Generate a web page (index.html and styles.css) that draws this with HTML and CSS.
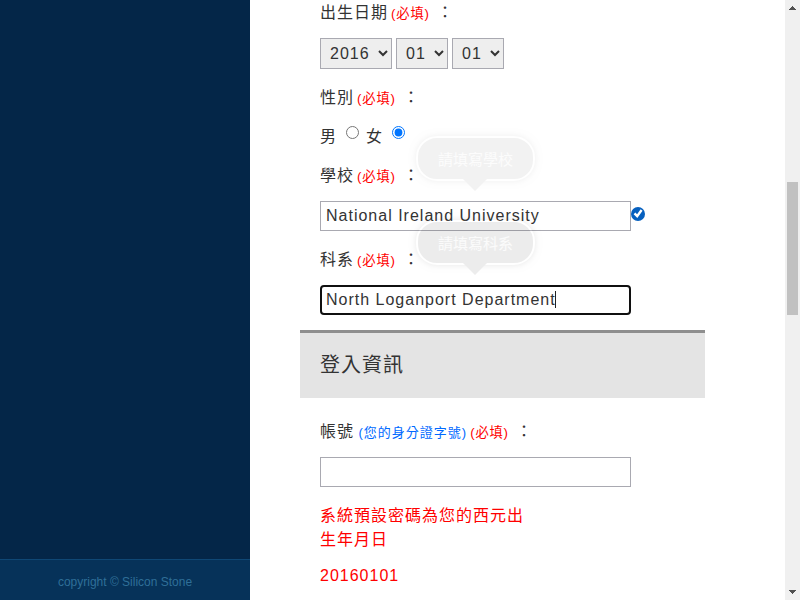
FILE: index.html
```html
<!DOCTYPE html>
<html lang="zh-Hant">
<head>
<meta charset="utf-8">
<title>Silicon Stone</title>
<link rel="stylesheet" href="styles.css">
</head>
<body>
<div class="app">
  <aside class="sidebar"><footer class="copyright">copyright © Silicon Stone</footer></aside>
  <main class="content">
    <form class="form">
      <div class="label">出生日期 <span class="required">(必填)</span> ：</div>
      <div class="selects">
        <select class="year"><option>2016</option></select>
        <select><option>01</option></select>
        <select><option>01</option></select>
      </div>
      <div class="label">性別 <span class="required">(必填)</span> ：</div>
      <div class="radios">
        <span>男</span><input type="radio" name="gender"><span>女</span><input type="radio" name="gender" checked>
      </div>
      <div class="label">學校 <span class="required">(必填)</span> ：</div>
      <div class="field">
        <div class="input">National Ireland University</div>
        <svg class="check" viewBox="0 0 14 14"><circle cx="7" cy="7" r="7"/><path d="M3.5 6.4 6.2 9.2 10.6 3"/></svg>
        <div class="tip"><span>請填寫學校</span></div>
      </div>
      <div class="label">科系 <span class="required">(必填)</span> ：</div>
      <div class="field">
        <div class="input focused">North Loganport Department<i class="caret"></i></div>
        <div class="tip stronger"><span>請填寫科系</span></div>
      </div>
      <h2 class="heading">登入資訊</h2>
      <div class="label">帳號 <span class="hint">(您的身分證字號)</span> <span class="required">(必填)</span> ：</div>
      <div class="field"><div class="input"></div></div>
      <p class="notice">系統預設密碼為您的西元出生年月日</p>
      <p class="notice">20160101</p>
    </form>
  </main>
  <div class="scrollbar">
    <svg class="arrow" viewBox="0 0 7 4" shape-rendering="crispEdges"><path d="M3 0h1v1h1v1h1v1h1v1H0V3h1V2h1V1h1z"/></svg>
    <div class="thumb"></div>
    <svg class="arrow" viewBox="0 0 7 4" shape-rendering="crispEdges"><path d="M0 0h7v1H6v1H5v1H4v1H3V3H2V2H1V1H0z"/></svg>
  </div>
</div>
</body>
</html>
```
FILE: styles.css
```css
* { box-sizing: border-box; }
body {
  margin: 0;
  overflow: hidden;
  color: #333;
  background: #fff;
  font: 16px/24px "Liberation Sans", "Noto Sans CJK TC", sans-serif;
  letter-spacing: 1px;
}
.app { display: flex; height: 600px; }
.sidebar {
  display: flex;
  flex-direction: column;
  justify-content: flex-end;
  width: 250px;
  background: #042648;
}
.copyright {
  height: 41px;
  padding-top: 2px;
  border-top: 1px solid #0f4775;
  background: #063259;
  color: #2f6f98;
  font-size: 12px;
  line-height: 40px;
  letter-spacing: 0;
  text-align: center;
}
.content { flex: 1; padding-left: 50px; }
.form { width: 405px; padding: 1px 20px 0; }
.label { height: 24px; white-space: nowrap; }
.required, .hint { font-size: 13px; }
.required { margin: 0 1.8px 0 -2.4px; color: #f00; font-size: 13.3px; letter-spacing: .8px; }
.hint { margin-left: -1px; color: #0069ff; }
.selects { display: flex; gap: 4px; margin: 13px 0 17px; }
select {
  width: 52px;
  height: 31px;
  padding: 0 0 0 5px;
  border: 1px solid #a9a9b1;
  border-radius: 0;
  background: #eee;
  color: #333;
  font: inherit;
  letter-spacing: 1px;
}
.year { width: 72px; }
.radios { display: flex; height: 30px; margin: 12px 0; line-height: 30px; }
.radios input { width: 13px; height: 13px; margin: 4px 7px 0 9px; }
.field { position: relative; display: flex; margin: 13px 0 17px; }
.input {
  width: 311px;
  height: 30px;
  padding: 0 5px;
  border: 1px solid #a9a9b1;
  background: #fff;
  line-height: 28px;
  white-space: nowrap;
}
.focused { padding: 0 4px; border: 2px solid #101010; border-radius: 4px; line-height: 26px; }
.caret { display: inline-block; width: 1px; height: 17px; margin-left: -1px; background: #222; vertical-align: -3px; }
.check { width: 14px; height: 14px; margin-top: 6px; flex: none; }
.check circle { fill: #0660bf; }
.check path { fill: none; stroke: #fff; stroke-width: 2.4; }
.tip {
  position: absolute;
  left: 96px;
  top: -65px;
  width: 119px;
  height: 45px;
  border: 2px solid #fff;
  border-radius: 21px;
  background: #333;
  box-shadow: 0 0 6px #000;
  color: #fff;
  font-size: 15px;
  line-height: 43px;
  letter-spacing: 0;
  text-align: center;
  opacity: .057;
}
.tip span { opacity: .8; }
.stronger { opacity: .087; }
.tip::after {
  content: "";
  position: absolute;
  left: 45px;
  top: 41px;
  border: 12.5px solid transparent;
  border-top-color: #333;
  border-bottom: 0;
}
.heading {
  height: 68px;
  margin: 15px -20px 22px;
  padding-left: 20px;
  border-top: 3px solid #8e8e8e;
  background: #e4e4e4;
  font-size: 20px;
  font-weight: 400;
  line-height: 64px;
}
.notice { width: 210px; margin: 0 0 12px; color: #f00; }
.field:has(+ .notice) { margin-bottom: 17px; }
.field:has(+ .heading) { margin-bottom: 0; }
.scrollbar {
  display: flex;
  flex-direction: column;
  align-items: center;
  width: 15px;
  padding: 6px 0;
  background: #f0f0f0;
}
.thumb { width: 11px; height: 133px; margin: 172px 0 auto; background: #c1c1c1; }
.arrow { width: 7px; height: 4px; fill: #505050; }
```
